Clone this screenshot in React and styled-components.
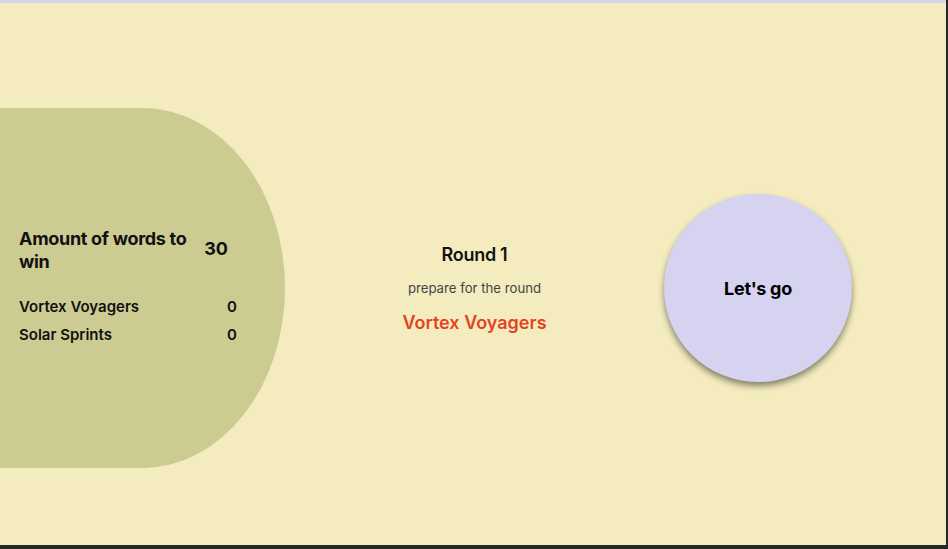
import React from "react";
import styled, { createGlobalStyle } from "styled-components";

const GlobalStyle = createGlobalStyle`
  html, body {
    margin: 0;
    padding: 0;
    background: #262626;
  }
  body {
    font-family: Inter, "Noto Sans", sans-serif;
    color: #111;
  }
`;

const teams = [
  { name: "Vortex Voyagers", score: 0 },
  { name: "Solar Sprints", score: 0 },
];

export default function App() {
  return (
    <>
      <GlobalStyle />
      <Page>
        <TopBar />
        <Main>
          <ScorePanel>
            <GoalRow>
              <GoalTitle>Amount of words to win</GoalTitle>
              <GoalValue>30</GoalValue>
            </GoalRow>
            <TeamList>
              {teams.map((t) => (
                <TeamRow key={t.name}>
                  <span>{t.name}</span>
                  <span>{t.score}</span>
                </TeamRow>
              ))}
            </TeamList>
          </ScorePanel>

          <RoundInfo>
            <RoundTitle>Round 1</RoundTitle>
            <RoundHint>prepare for the round</RoundHint>
            <ActiveTeam>Vortex Voyagers</ActiveTeam>
          </RoundInfo>

          <StartCell>
            <StartButton type="button">Let's go</StartButton>
          </StartCell>
        </Main>
      </Page>
    </>
  );
}

const Page = styled.div`
  width: 946px;
  display: flex;
  flex-direction: column;
`;

const TopBar = styled.div`
  height: 3px;
  background: #d8d4ee;
`;

const Main = styled.main`
  height: 514px;
  padding-top: 28px;
  background: #f4ecbf;
  display: grid;
  grid-template-columns: 285px 1fr 188px;
  align-items: center;
  padding-right: 94px;
`;

const ScorePanel = styled.section`
  height: 360px;
  box-sizing: border-box;
  background: #cccc92;
  border-radius: 0 50% 50% 0 / 0 50% 50% 0;
  padding: 0 48px 5px 19px;
  display: flex;
  flex-direction: column;
  justify-content: center;
  gap: 24px;
  margin-top: -1px;
`;

const GoalRow = styled.div`
  display: flex;
  align-items: center;
  justify-content: space-between;
  padding-right: 9px;
`;

const GoalTitle = styled.h2`
  margin: 0;
  width: 176px;
  font-size: 18px;
  font-weight: 700;
  line-height: 23px;
  letter-spacing: -0.3px;
`;

const GoalValue = styled.span`
  font-size: 18px;
  font-weight: 700;
  margin-top: -2px;
`;

const TeamList = styled.div`
  display: flex;
  flex-direction: column;
  gap: 9px;
`;

const TeamRow = styled.div`
  display: flex;
  justify-content: space-between;
  font-size: 15px;
  font-weight: 600;
  line-height: 19px;
`;

const RoundInfo = styled.section`
  display: flex;
  flex-direction: column;
  align-items: center;
  text-align: center;
  margin-top: 2px;
`;

const RoundTitle = styled.h1`
  margin: 0;
  font-size: 18px;
  font-weight: 600;
  line-height: 22px;
  letter-spacing: -0.3px;
`;

const RoundHint = styled.p`
  margin: 14px 0 0;
  font-size: 13.2px;
  color: #444;
  line-height: 16px;
`;

const ActiveTeam = styled.p`
  margin: 16px 0 0;
  font-size: 18px;
  font-weight: 600;
  color: #e2441f;
  line-height: 22px;
`;

const StartCell = styled.div`
  display: flex;
  justify-content: center;
`;

const StartButton = styled.button`
  width: 188px;
  height: 188px;
  border: none;
  border-radius: 50%;
  background: #d5d3f0;
  box-shadow: 0 4px 6px rgba(0, 0, 0, 0.45);
  font-family: Inter, "Noto Sans", sans-serif;
  font-size: 18px;
  font-weight: 700;
  color: #000;
  letter-spacing: -0.3px;
  cursor: pointer;
`;
